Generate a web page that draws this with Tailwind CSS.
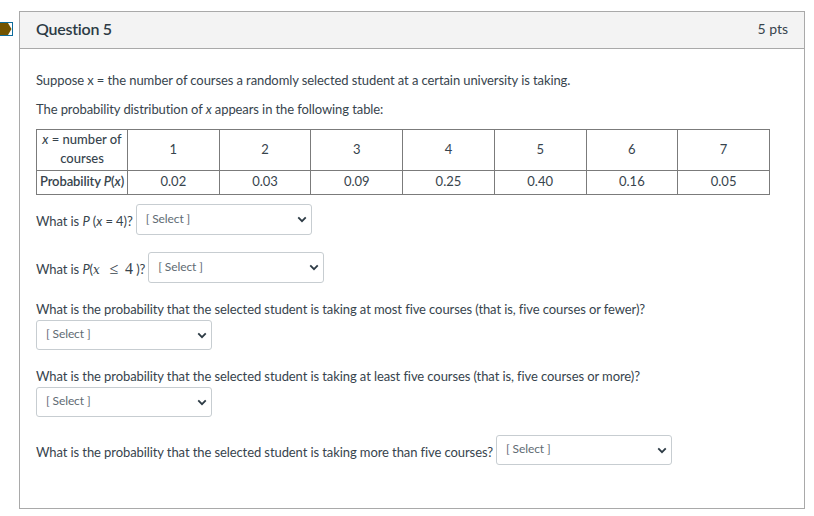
<!DOCTYPE html>
<html>
<head>
<meta charset="utf-8">
<script src="https://cdn.jsdelivr.net/npm/@tailwindcss/browser@4"></script>
</head>
<body class="bg-white font-['Lato',sans-serif] text-[13px] text-[#37444d] h-[516px] w-[814px] overflow-hidden relative">
<div class="absolute left-0 top-[22px] w-[13px] h-[14px] border border-l-0 border-[#0e6c9c]">
  <svg viewBox="0 0 12 12" class="w-full h-full block"><path d="M0 0H8L11.5 6L8 12H0Z" fill="#735400"/></svg>
</div>
<main class="pl-[19px] pt-[11px]">
  <section class="w-[786px] h-[498px] border border-[#a9a9a9] flex flex-col">
    <header class="h-[37px] shrink-0 bg-[#f3f3f3] border-b border-[#a9a9a9] px-[16px] pb-[2px] flex items-center justify-between">
      <h2 class="text-[16px] font-semibold leading-none tracking-[-0.25px] text-[#2d3b45]">Question 5</h2>
      <span class="text-[14px] leading-none">5 pts</span>
    </header>
    <div class="pl-[16px] pt-[23px]">
      <p class="h-[16px] leading-[16px] tracking-[-0.09px]">Suppose x = the number of courses a randomly selected student at a certain university is taking.</p>
      <p class="mt-[13px] h-[16px] leading-[16px] tracking-[-0.09px]">The probability distribution of <i>x</i> appears in the following table:</p>
      <table class="mt-[12px] w-[734px] table-fixed border-collapse text-center">
        <colgroup><col class="w-[91px]"><col span="7"></colgroup>
        <tbody>
          <tr class="h-[41px]">
            <td class="border border-[#7b7b7b] px-0 pt-0 pb-[2px] font-medium leading-[19px]"><i>x</i> = number of courses</td>
            <td class="border border-[#7b7b7b] p-0">1</td>
            <td class="border border-[#7b7b7b] p-0">2</td>
            <td class="border border-[#7b7b7b] p-0">3</td>
            <td class="border border-[#7b7b7b] p-0">4</td>
            <td class="border border-[#7b7b7b] p-0">5</td>
            <td class="border border-[#7b7b7b] p-0">6</td>
            <td class="border border-[#7b7b7b] p-0">7</td>
          </tr>
          <tr class="h-[24px]">
            <td class="border border-[#7b7b7b] px-0 pt-0 pb-[2px] font-semibold whitespace-nowrap tracking-[-0.1px]">Probability <i>P</i>(<i>x</i>)</td>
            <td class="border border-[#7b7b7b] px-0 pt-0 pb-[2px]">0.02</td>
            <td class="border border-[#7b7b7b] px-0 pt-0 pb-[2px]">0.03</td>
            <td class="border border-[#7b7b7b] px-0 pt-0 pb-[2px]">0.09</td>
            <td class="border border-[#7b7b7b] px-0 pt-0 pb-[2px]">0.25</td>
            <td class="border border-[#7b7b7b] px-0 pt-0 pb-[2px]">0.40</td>
            <td class="border border-[#7b7b7b] px-0 pt-0 pb-[2px]">0.16</td>
            <td class="border border-[#7b7b7b] px-0 pt-0 pb-[2px]">0.05</td>
          </tr>
        </tbody>
      </table>

      <div class="mt-[9px] flex items-center h-[31px] tracking-[-0.09px]">
        <span class="pt-[5px]">What is <i>P</i> (<i>x</i> = 4)?</span>
        <div class="ml-[3px] w-[176px] h-[31px] border border-[#c7cdd1] rounded-[3px] flex items-center justify-between pl-[9px] pr-[3px] pb-[1px] text-[12px] text-[#5f6b73] tracking-[-0.1px]">
          <span>[ Select ]</span>
          <svg viewBox="0 0 12 8" class="w-[10px] h-[7px] mt-[1px] mr-[1px]"><path d="M1.5 1.5L6 6L10.5 1.5" fill="none" stroke="#2d3b45" stroke-width="2.2"/></svg>
        </div>
      </div>

      <div class="mt-[17px] flex items-center h-[31px] tracking-[-0.09px]">
        <span class="pt-[3px] whitespace-pre">What is <i>P</i>(<i class="font-['DejaVu_Serif',serif] text-[12px]">x</i>   <span class="font-['Liberation_Serif',serif] text-[16px]">≤<span class="ml-[3px]"> 4</span></span> )?</span>
        <div class="ml-[3px] w-[176px] h-[31px] border border-[#c7cdd1] rounded-[3px] flex items-center justify-between pl-[9px] pr-[3px] pb-[1px] text-[12px] text-[#5f6b73] tracking-[-0.1px]">
          <span>[ Select ]</span>
          <svg viewBox="0 0 12 8" class="w-[10px] h-[7px] mt-[1px] mr-[1px]"><path d="M1.5 1.5L6 6L10.5 1.5" fill="none" stroke="#2d3b45" stroke-width="2.2"/></svg>
        </div>
      </div>

      <p class="mt-[18px] h-[16px] leading-[16px] tracking-[-0.09px]">What is the probability that the selected student is taking at most five courses (that is, five courses or fewer)?</p>
      <div class="mt-[3px] w-[176px] h-[30px] border border-[#c7cdd1] rounded-[3px] flex items-center justify-between pl-[9px] pr-[3px] pb-[3px] text-[12px] text-[#5f6b73] tracking-[-0.1px]">
        <span>[ Select ]</span>
        <svg viewBox="0 0 12 8" class="w-[10px] h-[7px] mt-[3px] mr-[1px]"><path d="M1.5 1.5L6 6L10.5 1.5" fill="none" stroke="#2d3b45" stroke-width="2.2"/></svg>
      </div>

      <p class="mt-[18px] h-[16px] leading-[16px] tracking-[-0.09px]">What is the probability that the selected student is taking at least five courses (that is, five courses or more)?</p>
      <div class="mt-[3px] w-[176px] h-[30px] border border-[#c7cdd1] rounded-[3px] flex items-center justify-between pl-[9px] pr-[3px] pb-[3px] text-[12px] text-[#5f6b73] tracking-[-0.1px]">
        <span>[ Select ]</span>
        <svg viewBox="0 0 12 8" class="w-[10px] h-[7px] mt-[3px] mr-[1px]"><path d="M1.5 1.5L6 6L10.5 1.5" fill="none" stroke="#2d3b45" stroke-width="2.2"/></svg>
      </div>

      <div class="mt-[18px] flex items-center h-[30px] tracking-[-0.09px]">
        <span class="pt-[5px]">What is the probability that the selected student is taking more than five courses?</span>
        <div class="ml-[3px] w-[176px] h-[30px] border border-[#c7cdd1] rounded-[3px] flex items-center justify-between pl-[9px] pr-[3px] pb-[3px] text-[12px] text-[#5f6b73] tracking-[-0.1px]">
          <span>[ Select ]</span>
          <svg viewBox="0 0 12 8" class="w-[10px] h-[7px] mt-[3px] mr-[1px]"><path d="M1.5 1.5L6 6L10.5 1.5" fill="none" stroke="#2d3b45" stroke-width="2.2"/></svg>
        </div>
      </div>
    </div>
  </section>
</main>
</body>
</html>
